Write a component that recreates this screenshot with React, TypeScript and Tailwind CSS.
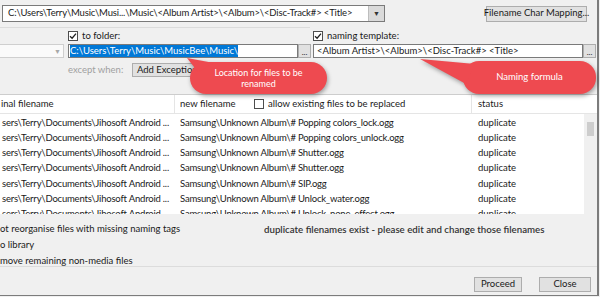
import React from 'react';

const rows = [
  'Popping colors_lock.ogg',
  'Popping colors_unlock.ogg',
  'Shutter.ogg',
  'Shutter.ogg',
  'SIP.ogg',
  'Unlock_water.ogg',
  'Unlock_none_effect.ogg',
];

function Check({ checked }: { checked?: boolean }) {
  return (
    <span className="w-[10px] h-[10px] border border-[#4d4d4d] bg-white flex items-center justify-center shrink-0">
      {checked && (
        <svg width="8" height="8" viewBox="0 0 8 8">
          <path d="M1 4.2 L3.1 6.2 L7 1.6" fill="none" stroke="#222" strokeWidth="1.3" />
        </svg>
      )}
    </span>
  );
}

function Btn({ label, w }: { label: string; w: string }) {
  return (
    <div className={`${w} h-full border border-[#adadad] bg-[#e1e1e1] flex items-center justify-center whitespace-nowrap text-[#1a1a1a]`}>
      {label}
    </div>
  );
}

export default function App() {
  return (
    <div className="w-[600px] h-[297px] bg-[#f0f0f0] relative overflow-hidden text-[9.5px] text-[#1a1a1a] font-['Lato','Noto_Sans',sans-serif]">
      <div className="w-[599px] h-[296px] border-r-2 border-b border-[#7c7c7c] flex flex-col">
        {/* top path combo */}
        <div className="mt-[5px] h-[17px] flex items-center">
          <div className="ml-[2px] w-[383px] h-full border border-[#7a7a7a] bg-white flex">
            <div className="flex-1 pl-[5px] flex items-center whitespace-nowrap overflow-hidden tracking-[-0.15px]">
              {'C:\\Users\\Terry\\Music\\Musi...\\Music\\<Album Artist>\\<Album>\\<Disc-Track#> <Title>'}
            </div>
            <div className="w-[16px] bg-[#dadada] border-l border-[#bdbdbd] flex items-center justify-center text-[7px] text-[#333]">
              ▼
            </div>
          </div>
          <div className="ml-auto mr-[10px] h-[16px]">
            <Btn label="Filename Char Mapping..." w="w-[101px]" />
          </div>
        </div>

        <div className="mt-[5px] h-px bg-[#dcdcdc] w-[310px]" />

        {/* checkbox labels */}
        <div className="mt-[3px] h-[10px] flex items-center">
          <div className="pl-[68px] w-[313px] flex items-center gap-[4px]">
            <Check checked />
            <span>to folder:</span>
          </div>
          <div className="flex items-center gap-[4px]">
            <Check checked />
            <span>naming template:</span>
          </div>
        </div>

        {/* inputs */}
        <div className="mt-[3px] h-[14px] flex">
          <div className="w-[64px] h-full border border-[#cfcfcf] border-l-0 bg-[#fafafa] flex justify-end items-center pr-[2px] text-[7px] text-[#a8a8a8]">
            ▼
          </div>
          <div className="ml-[4px] w-[230px] h-full border border-[#7a7a7a] bg-white flex items-center pl-[1px] whitespace-nowrap">
            <span className="bg-[#0078d7] text-white leading-[12px]">{'C:\\Users\\Terry\\Music\\MusicBee\\Music\\'}</span>
          </div>
          <div className="w-[13px] h-full border border-[#adadad] bg-[#e1e1e1] flex items-end justify-center text-[8px] leading-[10px]">...</div>
          <div className="ml-[2px] w-[270px] h-full border border-[#7a7a7a] bg-white flex items-center pl-[3px] whitespace-nowrap overflow-hidden">
            {'<Album Artist>\\<Album>\\<Disc-Track#> <Title>'}
          </div>
          <div className="w-[13px] h-full border border-[#adadad] bg-[#e1e1e1] flex items-end justify-center text-[8px] leading-[10px]">...</div>
        </div>

        {/* except when */}
        <div className="mt-[5px] h-[14px] flex items-center">
          <span className="pl-[68px] text-[#a0a0a0]">except when:</span>
          <div className="ml-[9px] h-full">
            <Btn label="Add Exception" w="w-[70px]" />
          </div>
        </div>

        {/* table */}
        <div className="mt-[17px] h-[120px] w-[597px] border-t border-[#cdcdcd] bg-white flex flex-col overflow-hidden">
          <div className="h-[19px] shrink-0 flex border-b border-[#e5e5e5]">
            <div className="w-[175px] border-r border-[#e5e5e5] flex items-center pl-[1px] whitespace-nowrap">inal filename</div>
            <div className="w-[297px] border-r border-[#e5e5e5] flex items-center pl-[5px] whitespace-nowrap">
              <span className="w-[74px]">new filename</span>
              <Check />
              <span className="ml-[4px]">allow existing files to be replaced</span>
            </div>
            <div className="flex-1 flex items-center pl-[6px]">status</div>
          </div>
          <div className="flex-1 flex min-h-0">
            <div className="flex-1 pt-[1px] overflow-hidden">
              {rows.map((r, i) => (
                <div key={i} className="h-[15.3px] flex items-center whitespace-nowrap">
                  <div className="w-[175px] pl-[2px] overflow-hidden tracking-[-0.2px]">{'sers\\Terry\\Documents\\Jihosoft Android ...'}</div>
                  <div className="w-[297px] pl-[5px] overflow-hidden tracking-[-0.2px]">{'Samsung\\Unknown Album\\# ' + r}</div>
                  <div className="pl-[6px]">duplicate</div>
                </div>
              ))}
            </div>
            <div className="w-[13px] bg-[#f0f0f0] pt-[8px] flex justify-center">
              <div className="w-[7px] h-[14px] bg-[#cdcdcd]" />
            </div>
          </div>
        </div>

        {/* footer messages */}
        <div className="mt-[7px] h-[45px] flex leading-[16px] whitespace-nowrap">
          <div className="w-[264px]">
            <div>ot reorganise files with missing naming tags</div>
            <div>o library</div>
            <div>move remaining non-media files</div>
          </div>
          <div className="font-semibold text-[#333] text-[9.7px]">duplicate filenames exist - please edit and change those filenames</div>
        </div>

        <div className="h-px bg-[#dcdcdc]" />

        <div className="mt-[10px] h-[15px] flex justify-end pr-[6px] gap-[17px]">
          <Btn label="Proceed" w="w-[48px]" />
          <Btn label="Close" w="w-[52px]" />
        </div>
      </div>

      {/* callouts */}
      <svg className="absolute left-0 top-0 drop-shadow-[1px_2px_2px_rgba(0,0,0,0.35)]" width="600" height="297" viewBox="0 0 600 297">
        <rect x="190" y="62" width="137" height="32" rx="16" fill="#ee4a50" />
        <polygon points="187,58 214,63 198,72" fill="#ee4a50" />
        <rect x="463" y="61" width="133" height="33" rx="16" fill="#ee4a50" />
        <polygon points="420,59 475,64 466,84" fill="#ee4a50" />
      </svg>
      <div className="absolute left-[190px] top-[62px] w-[137px] h-[32px] flex flex-col items-center justify-center text-white text-[9px] leading-[11px] text-center">
        <span>Location for files to be</span>
        <span>renamed</span>
      </div>
      <div className="absolute left-[463px] top-[61px] w-[133px] h-[33px] flex items-center justify-center text-white text-[9.5px]">
        Naming formula
      </div>
    </div>
  );
}
